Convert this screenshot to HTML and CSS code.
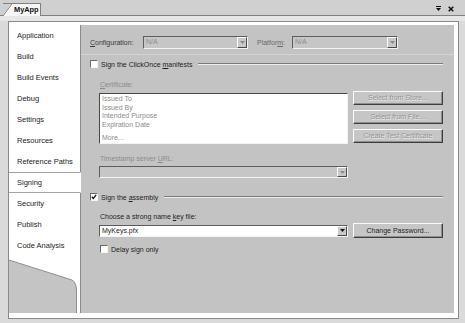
FILE: index.html
```html
<!DOCTYPE html>
<html lang="en">

<head>
    <meta charset="UTF-8">
    <meta name="viewport" content="width=device-width, initial-scale=1.0">
    <title>MyApp - Signing</title>
    <link rel="stylesheet" href="styles.css">
</head>

<body>

    <div class="tabstrip">
        <div class="doc-tab">MyApp</div>
        <div class="strip-tools">
            <svg class="tool" width="7" height="6" viewBox="0 0 7 6">
                <rect x="1" y="0" width="5" height="1" fill="#111" />
                <path d="M1 2h5L3.5 5z" fill="#111" />
            </svg>
            <svg class="tool" width="6" height="6" viewBox="0 0 6 6">
                <path d="M0.7 0.7l4.6 4.6M5.3 0.7l-4.6 4.6" stroke="#111" stroke-width="1.5" />
            </svg>
        </div>
    </div>
    <div class="band"></div>

    <div class="frame">
        <ul class="nav">
            <li>Application</li>
            <li>Build</li>
            <li>Build Events</li>
            <li>Debug</li>
            <li>Settings</li>
            <li>Resources</li>
            <li>Reference Paths</li>
            <li class="active">Signing</li>
            <li>Security</li>
            <li>Publish</li>
            <li>Code Analysis</li>
            <li class="nav-fill">
                <svg width="71" height="57" viewBox="0 0 71 57">
                    <path d="M0 4L63 24Q67 26 67.5 34L67.5 57L0 57Z" fill="#c4c4c4" />
                    <path d="M0 4L63 24Q67 26 67.5 34L67.5 57" fill="none" stroke="#8e8e8e" stroke-width="1" />
                </svg>
            </li>
        </ul>

        <div class="page">
            <div class="toolbar">
                <span class="tb-label"><u>C</u>onfiguration:</span>
                <div class="combo disabled w-config">
                    <span class="combo-value">N/A</span>
                    <span class="combo-arrow"><svg width="5" height="3" viewBox="0 0 5 3"><path d="M0 0h5L2.5 3z" fill="#8a8a8a" /></svg></span>
                </div>
                <span class="tb-label platform">Platfor<u>m</u>:</span>
                <div class="combo disabled w-platform">
                    <span class="combo-value">N/A</span>
                    <span class="combo-arrow"><svg width="5" height="3" viewBox="0 0 5 3"><path d="M0 0h5L2.5 3z" fill="#8a8a8a" /></svg></span>
                </div>
            </div>

            <div class="form">
                <div class="section">
                    <span class="check"></span>
                    <span>Sign the ClickOnce <u>m</u>anifests</span>
                    <span class="rule"></span>
                </div>

                <div class="group">
                    <div class="label muted cert-label"><u>C</u>ertificate:</div>
                    <div class="cert">
                        <div class="listbox">
                            <div>Issued To</div>
                            <div>Issued By</div>
                            <div>Intended Purpose</div>
                            <div>Expiration Date</div>
                            <div class="more">More...</div>
                        </div>
                        <div class="cert-buttons">
                            <div class="btn disabled">Select from Store...</div>
                            <div class="btn disabled">Select from File...</div>
                            <div class="btn disabled">Create Test Certificate</div>
                        </div>
                    </div>

                    <div class="label muted ts-label">Timestamp server <u>U</u>RL:</div>
                    <div class="combo disabled wide ts-combo">
                        <span class="combo-value"></span>
                        <span class="combo-arrow"><svg width="5" height="3" viewBox="0 0 5 3"><path d="M0 0h5L2.5 3z" fill="#8a8a8a" /></svg></span>
                    </div>
                </div>

                <div class="section assembly">
                    <span class="check"><svg width="6" height="6" viewBox="0 0 6 6"><path d="M0.8 2.8l1.5 1.6 2.9-3.6" fill="none" stroke="#111" stroke-width="1.3" /></svg></span>
                    <span>Sign the <u>a</u>ssembly</span>
                    <span class="rule"></span>
                </div>

                <div class="group">
                    <div class="label key-label">Choose a strong name <u>k</u>ey file:</div>
                    <div class="key-row">
                        <div class="combo wide">
                            <span class="combo-value">MyKeys.pfx</span>
                            <span class="combo-arrow"><svg width="5" height="3" viewBox="0 0 5 3"><path d="M0 0h5L2.5 3z" fill="#111" /></svg></span>
                        </div>
                        <div class="btn">Change Password...</div>
                    </div>
                    <div class="section delay">
                        <span class="check"></span>
                        <span>Delay sign only</span>
                    </div>
                </div>
            </div>
        </div>
    </div>

</body>

</html>
```

FILE: styles.css
```css
body {
    margin: 0;
    width: 465px;
    height: 323px;
    overflow: hidden;
    background-color: #dadada;
    color: #1e1e1e;
    font-family: "Liberation Sans", Arial, sans-serif;
    font-size: 7px;
}

u {
    text-decoration: underline;
}

/* document tab strip */
.tabstrip {
    display: flex;
    align-items: flex-end;
    height: 15px;
    background-color: #d0d0d0;
    border-bottom: 1px solid #808080;
}

.doc-tab {
    box-sizing: border-box;
    height: 13px;
    width: 38px;
    margin-left: 3px;
    margin-bottom: -1px;
    padding-left: 11px;
    line-height: 12px;
    font-weight: bold;
    font-size: 7.4px;
    color: #111;
    border-top: 1px solid #808080;
    border-right: 1px solid #808080;
    background:
        linear-gradient(to bottom right, transparent calc(50% - 0.7px), #808080 50%, #f6f6f6 calc(50% + 0.7px)) no-repeat 0 0 / 9px 100%,
        linear-gradient(#f6f6f6, #f6f6f6) no-repeat 9px 0 / 100% 100%;
}

.strip-tools {
    display: flex;
    gap: 6px;
    margin-left: auto;
    margin-right: 11px;
    align-self: center;
    padding-top: 2px;
}

.band {
    height: 5px;
    background-color: #e6e6e6;
}

/* main frame */
.frame {
    box-sizing: border-box;
    display: flex;
    width: 451px;
    height: 298px;
    margin-left: 8px;
    padding: 3px 4px 5px 0;
    border: 1px solid #8a8a8a;
    background-color: #fff;
}

.nav {
    list-style: none;
    margin: 0;
    padding: 0;
    width: 72px;
    display: flex;
    flex-direction: column;
    font-size: 7.5px;
}

.nav li {
    box-sizing: border-box;
    display: flex;
    align-items: center;
    height: 21px;
    padding-left: 8px;
    border-right: 1px solid #8a8a8a;
    white-space: nowrap;
}

.nav li.active {
    border-top: 1px solid #a4a4a4;
    border-bottom: 1px solid #a4a4a4;
    border-right-color: transparent;
}

.nav li.nav-fill {
    flex: 1;
    padding: 0;
    align-items: flex-start;
}

.nav-fill svg {
    display: block;
}

.page {
    flex: 1;
    display: flex;
    flex-direction: column;
    background-color: #c3c3c3;
}

.toolbar {
    box-sizing: border-box;
    display: flex;
    align-items: center;
    height: 30px;
    padding-top: 5px;
    padding-left: 9px;
    border-bottom: 1px solid #d4d4d4;
}

.tb-label {
    width: 53px;
    color: #3a3a3a;
}

.tb-label.platform {
    width: 35px;
    margin-left: 9px;
    color: #6a6a6a;
}

/* combo boxes */
.combo {
    box-sizing: border-box;
    display: flex;
    height: 13px;
    border: 1px solid;
    border-color: #5e5e5e #f4f4f4 #f4f4f4 #5e5e5e;
    background-color: #fff;
}

.combo.disabled {
    background-color: #c6c6c6;
    color: #8e8e8e;
}

.w-config {
    width: 105px;
}

.w-platform {
    width: 106px;
}

.combo.wide {
    width: 249px;
    height: 12px;
}

.combo-value {
    flex: 1;
    padding-left: 2px;
    line-height: 10px;
}

.combo-arrow {
    box-sizing: border-box;
    width: 10px;
    display: flex;
    align-items: center;
    justify-content: center;
    border: 1px solid;
    border-color: #fbfbfb #4a4a4a #4a4a4a #fbfbfb;
    background-color: #c9c9c9;
}

.combo-arrow svg {
    display: block;
}

/* form body */
.form {
    padding: 0 11px 0 9px;
}

.section {
    display: flex;
    align-items: center;
    height: 10px;
    margin-top: 4px;
    white-space: nowrap;
}

.section.assembly {
    margin-top: 14px;
}

.section.delay {
    margin-top: 6px;
    margin-left: 1px;
}

.check {
    box-sizing: border-box;
    width: 8px;
    height: 8px;
    margin-right: 3px;
    display: flex;
    align-items: center;
    justify-content: center;
    border: 1px solid;
    border-color: #6a6a6a #f6f6f6 #f6f6f6 #6a6a6a;
    background-color: #fff;
}

.check svg {
    display: block;
}

.rule {
    flex: 1;
    margin-left: 6px;
    border-top: 1px solid #7a7a7a;
    border-bottom: 1px solid #eeeeee;
}

.group {
    padding-left: 9px;
}

.label {
    height: 9px;
    line-height: 9px;
    padding-left: 1px;
    white-space: nowrap;
}

.muted {
    color: #8c8c8c;
}

.cert-label {
    margin-top: 11px;
}

.ts-label,
.key-label {
    margin-top: 10px;
}

.cert {
    display: flex;
    margin-top: 2px;
}

.listbox {
    box-sizing: border-box;
    width: 249px;
    height: 51px;
    margin-top: 2px;
    padding: 1px 2px 0;
    line-height: 8.6px;
    color: #8c8c8c;
    background-color: #fff;
    border: 1px solid;
    border-color: #4a4a4a #f4f4f4 #f4f4f4 #4a4a4a;
}

.listbox .more {
    margin-top: 5px;
}

.cert-buttons {
    display: flex;
    flex-direction: column;
    gap: 5px;
    margin-left: 5px;
}

.btn {
    box-sizing: border-box;
    width: 90px;
    height: 14px;
    line-height: 12px;
    text-align: center;
    white-space: nowrap;
    border: 1px solid;
    border-color: #fbfbfb #3e3e3e #3e3e3e #fbfbfb;
    box-shadow: inset -1px -1px 0 #8e8e8e;
    background-color: #c6c6c6;
    color: #1e1e1e;
}

.btn.disabled {
    color: #949494;
    text-shadow: 0.6px 0.6px 0 #ececec;
}

.ts-combo {
    margin-top: 3px;
}

.key-row {
    display: flex;
    align-items: center;
    gap: 5px;
    margin-top: 2px;
}

.key-row .btn {
    height: 15px;
    line-height: 13px;
}
```
